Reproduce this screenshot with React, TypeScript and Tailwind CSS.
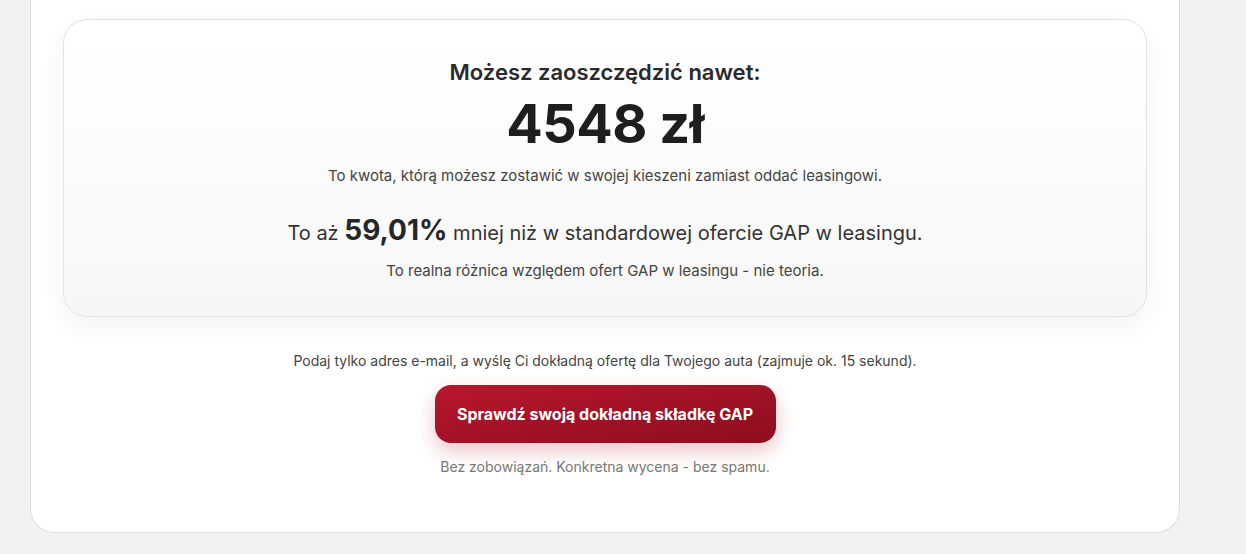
import React from 'react';

const SavingsSummary: React.FC = () => {
    return (
        <div className="flex flex-col items-center rounded-[24px] border border-[#e2e2e2] bg-gradient-to-b from-white to-[#f7f7f7] px-8 pt-[37px] pb-[34px] shadow-[0_10px_30px_rgba(0,0,0,0.05)]">
            <h2 className="text-[22px] leading-[30px] font-semibold text-[#2a2a2a]">Możesz zaoszczędzić nawet:</h2>
            <p className="mt-[7px] text-[54px] leading-[60px] font-bold tracking-[-0.5px] text-[#1e1e1e]">4548 zł</p>
            <p className="mt-[11px] text-[15px] leading-[22px] text-[#444]">
                To kwota, którą możesz zostawić w swojej kieszeni zamiast oddać leasingowi.
            </p>
            <p className="mt-[27px] text-[20px] leading-[32px] text-[#333]">
                To aż <span className="text-[28px] font-bold text-[#262626]">59,01%</span> mniej niż w standardowej ofercie GAP w leasingu.
            </p>
            <p className="mt-[11px] text-[15px] leading-[22px] text-[#444]">
                To realna różnica względem ofert GAP w leasingu - nie teoria.
            </p>
        </div>
    );
};

export default function App() {
    return (
        <div className="min-h-[554px] bg-[#f2f2f2] font-['Inter',sans-serif]">
            <div className="ml-[30px] w-[1150px] rounded-b-[24px] border-x border-b border-[#dedede] bg-white px-8 pt-[19px] pb-[55px]">
                <SavingsSummary />
                <div className="mt-[34px] flex flex-col items-center">
                    <p className="text-[14px] leading-[20px] text-[#444]">
                        Podaj tylko adres e-mail, a wyślę Ci dokładną ofertę dla Twojego auta (zajmuje ok. 15 sekund).
                    </p>
                    <button
                        type="button"
                        className="mt-[14px] h-[58px] w-[341px] rounded-[16px] bg-gradient-to-br from-[#b8172e] to-[#8c0d1f] text-[16px] font-bold text-white shadow-[0_8px_20px_rgba(170,20,40,0.25)]"
                    >
                        Sprawdź swoją dokładną składkę GAP
                    </button>
                    <p className="mt-[14px] text-[14px] leading-[20px] text-[#777]">
                        Bez zobowiązań. Konkretna wycena - bez spamu.
                    </p>
                </div>
            </div>
        </div>
    );
}
